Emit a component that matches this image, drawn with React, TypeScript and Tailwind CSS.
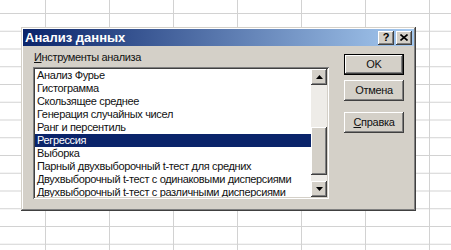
const tools = [
  'Анализ Фурье',
  'Гистограмма',
  'Скользящее среднее',
  'Генерация случайных чисел',
  'Ранг и персентиль',
  'Регрессия',
  'Выборка',
  'Парный двухвыборочный t-тест для средних',
  'Двухвыборочный t-тест с одинаковыми дисперсиями',
  'Двухвыборочный t-тест с различными дисперсиями',
];

const raised =
  'shadow-[inset_-1px_-1px_#404040,inset_1px_1px_#ffffff,inset_-2px_-2px_#808080,inset_2px_2px_#d4d0c8]';

function ArrowBtn({ down }: { down?: boolean }) {
  return (
    <div className={`h-[16px] w-[16px] bg-[#d4d0c8] flex items-center justify-center ${raised}`}>
      <svg width="7" height="4" viewBox="0 0 7 4">
        {down ? <path d="M0 0h7L3.5 4z" fill="#000" /> : <path d="M0 4h7L3.5 0z" fill="#000" />}
      </svg>
    </div>
  );
}

function Button({ children, isDefault }: { children: React.ReactNode; isDefault?: boolean }) {
  return (
    <div
      className={`w-[60px] h-[21px] bg-[#d4d0c8] flex items-center justify-center text-[11px] tracking-[-0.3px] text-[#111] ${
        isDefault
          ? 'border border-black shadow-[inset_-1px_-1px_#404040,inset_1px_1px_#ffffff,inset_-2px_-2px_#808080]'
          : raised
      }`}
    >
      {children}
    </div>
  );
}

export default function App() {
  return (
    <div
      className="relative w-[451px] h-[250px] overflow-hidden bg-white bg-[linear-gradient(to_right,#d2d2d2_1px,transparent_1px),linear-gradient(to_bottom,#d2d2d2_1px,transparent_1px)] bg-[size:64px_17.75px] bg-[position:45px_13px]"
      style={{ fontFamily: '"Liberation Sans", Arial, sans-serif' }}
    >
      {/* dialog window */}
      <div className="absolute left-[21px] top-[27px] w-[395px] h-[184px] bg-[#d4d0c8] p-[2px] flex flex-col shadow-[inset_-1px_-1px_#404040,inset_1px_1px_#d4d0c8,inset_-2px_-2px_#808080,inset_2px_2px_#ffffff]">
        {/* title bar */}
        <div className="h-[17px] flex items-center justify-between pl-[2px] pr-[2px] bg-[linear-gradient(to_right,#0a246a,#a6caf0)]">
          <span className="text-white font-bold text-[13px] leading-none">Анализ данных</span>
          <div className="flex gap-[2px]">
            <div className={`w-[16px] h-[14px] bg-[#d4d0c8] flex items-center justify-center text-[11px] font-bold leading-none ${raised}`}>
              ?
            </div>
            <div className={`w-[16px] h-[14px] bg-[#d4d0c8] flex items-center justify-center ${raised}`}>
              <svg width="8" height="7" viewBox="0 0 8 7">
                <path d="M0.5 0.5l7 6M7.5 0.5l-7 6" stroke="#000" strokeWidth="1.6" />
              </svg>
            </div>
          </div>
        </div>

        <div className="flex">
          {/* tools list */}
          <div className="ml-[10px] pt-[5px] flex flex-col">
            <div className="text-[11px] leading-[13px] tracking-[-0.35px] text-[#111] pl-[1px]">
              <span className="underline">И</span>нструменты анализа
            </div>
            <div className="mt-[3px] w-[296px] h-[132px] bg-white flex shadow-[inset_1px_1px_#808080,inset_-1px_-1px_#ffffff,inset_2px_2px_#404040,inset_-2px_-2px_#d4d0c8] p-[2px]">
              <div className="flex-1 overflow-hidden">
                {tools.map((t) => (
                  <div
                    key={t}
                    className={`h-[13px] leading-[13px] text-[11px] tracking-[-0.35px] pl-[2px] whitespace-nowrap ${
                      t === 'Регрессия' ? 'bg-[#0a246a] text-white' : 'text-[#111]'
                    }`}
                  >
                    {t}
                  </div>
                ))}
              </div>
              {/* scrollbar */}
              <div className="w-[16px] flex flex-col">
                <ArrowBtn />
                <div className="h-[42px] bg-[#eeece8]" />
                <div className={`h-[48px] bg-[#d4d0c8] ${raised}`} />
                <div className="flex-1 bg-[#eeece8]" />
                <ArrowBtn down />
              </div>
            </div>
          </div>

          {/* buttons */}
          <div className="ml-[15px] pt-[8px] flex flex-col">
            <Button isDefault>OK</Button>
            <div className="mt-[5px]">
              <Button>Отмена</Button>
            </div>
            <div className="mt-[11px]">
              <Button>
                <span>
                  <span className="underline">С</span>правка
                </span>
              </Button>
            </div>
          </div>
        </div>
      </div>
    </div>
  );
}
